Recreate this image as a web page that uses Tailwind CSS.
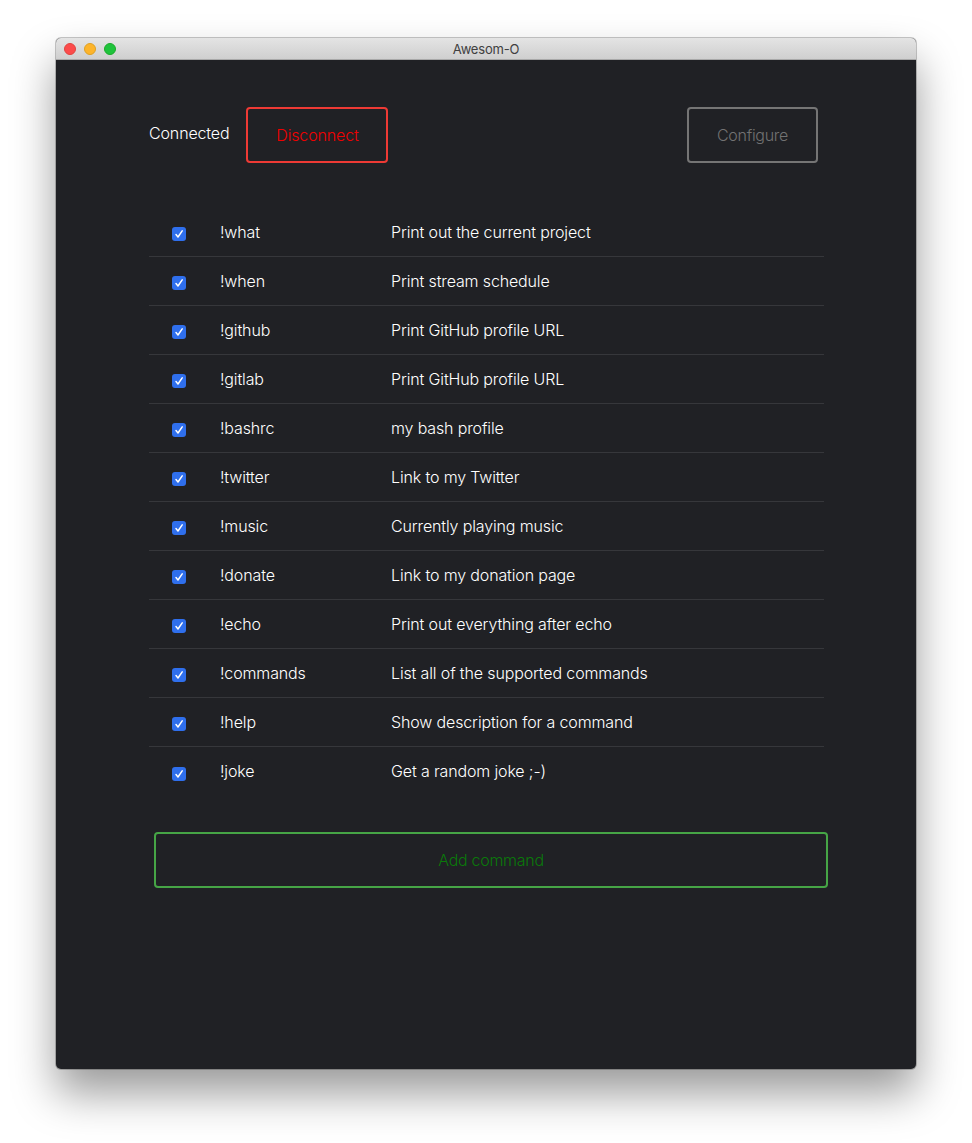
<!DOCTYPE html>
<html lang="en">

<head>
  <meta charset="UTF-8" />
  <title>Awesom-O</title>
  <script src="https://cdn.jsdelivr.net/npm/@tailwindcss/browser@4"></script>
</head>

<body class="bg-white font-['Inter',sans-serif] w-[972px] h-[1143px] overflow-hidden pt-[38px] pl-[56px]">

  <!-- Window -->
  <div class="w-[860px] h-[1031px] rounded-[5px] bg-[#202125] flex flex-col shadow-[0_0_0_1px_rgba(0,0,0,0.22),0_24px_44px_rgba(0,0,0,0.4)]">

    <!-- Title bar -->
    <div class="h-[22px] shrink-0 flex items-center relative rounded-t-[5px] bg-gradient-to-b from-[#e4e4e4] to-[#cfcfcf] border-b border-[#a8a8a8]">
      <div class="flex gap-2 pl-2">
        <span class="w-3 h-3 rounded-full bg-[#fc4b4b] border border-[#e0443e]"></span>
        <span class="w-3 h-3 rounded-full bg-[#fdb42a] border border-[#dea123]"></span>
        <span class="w-3 h-3 rounded-full bg-[#1fc33c] border border-[#1aab29]"></span>
      </div>
      <span class="absolute inset-x-0 text-center text-[13px] leading-[22px] tracking-[-0.2px] text-[#404040]">Awesom-O</span>
    </div>

    <div class="flex flex-col tracking-[-0.14px] font-[350]">
      <!-- Top bar -->
      <div class="pt-[47px] pl-[93px] pr-[98px] flex justify-between">
        <div class="flex gap-[17px]">
          <span class="text-white text-base leading-[52px]">Connected</span>
          <button class="w-[142px] h-[56px] border-2 border-[#ee3a35] rounded text-[#f00000] text-base">Disconnect</button>
        </div>
        <button class="w-[131px] h-[56px] border-2 border-[#757575] rounded text-[#727272] text-base tracking-[-0.29px]">Configure</button>
      </div>

      <!-- Commands -->
      <div id="commands" class="mt-[45px] ml-[93px] w-[675px] flex flex-col divide-y divide-[#36373b] text-white text-base">
        <div class="h-[49px] flex items-center"><span class="ml-[23px] w-[14px] h-[14px] mt-[4px] rounded-[3px] bg-[#2f6fed] flex items-center justify-center"><svg width="10" height="10" viewBox="0 0 10 10" fill="none" stroke="white" stroke-width="1.5" stroke-linecap="round" stroke-linejoin="round"><path d="M2 5.5 L4 8 L8.2 1.8" /></svg></span><span class="ml-[34px] w-[171px] -mt-[1px]">!what</span><span class="-mt-[1px]">Print out the current project</span></div>
        <div class="h-[49px] flex items-center"><span class="ml-[23px] w-[14px] h-[14px] mt-[4px] rounded-[3px] bg-[#2f6fed] flex items-center justify-center"><svg width="10" height="10" viewBox="0 0 10 10" fill="none" stroke="white" stroke-width="1.5" stroke-linecap="round" stroke-linejoin="round"><path d="M2 5.5 L4 8 L8.2 1.8" /></svg></span><span class="ml-[34px] w-[171px] -mt-[1px]">!when</span><span class="-mt-[1px]">Print stream schedule</span></div>
        <div class="h-[49px] flex items-center"><span class="ml-[23px] w-[14px] h-[14px] mt-[4px] rounded-[3px] bg-[#2f6fed] flex items-center justify-center"><svg width="10" height="10" viewBox="0 0 10 10" fill="none" stroke="white" stroke-width="1.5" stroke-linecap="round" stroke-linejoin="round"><path d="M2 5.5 L4 8 L8.2 1.8" /></svg></span><span class="ml-[34px] w-[171px] -mt-[1px]">!github</span><span class="-mt-[1px]">Print GitHub profile URL</span></div>
        <div class="h-[49px] flex items-center"><span class="ml-[23px] w-[14px] h-[14px] mt-[4px] rounded-[3px] bg-[#2f6fed] flex items-center justify-center"><svg width="10" height="10" viewBox="0 0 10 10" fill="none" stroke="white" stroke-width="1.5" stroke-linecap="round" stroke-linejoin="round"><path d="M2 5.5 L4 8 L8.2 1.8" /></svg></span><span class="ml-[34px] w-[171px] -mt-[1px]">!gitlab</span><span class="-mt-[1px]">Print GitHub profile URL</span></div>
        <div class="h-[49px] flex items-center"><span class="ml-[23px] w-[14px] h-[14px] mt-[4px] rounded-[3px] bg-[#2f6fed] flex items-center justify-center"><svg width="10" height="10" viewBox="0 0 10 10" fill="none" stroke="white" stroke-width="1.5" stroke-linecap="round" stroke-linejoin="round"><path d="M2 5.5 L4 8 L8.2 1.8" /></svg></span><span class="ml-[34px] w-[171px] -mt-[1px]">!bashrc</span><span class="-mt-[1px]">my bash profile</span></div>
        <div class="h-[49px] flex items-center"><span class="ml-[23px] w-[14px] h-[14px] mt-[4px] rounded-[3px] bg-[#2f6fed] flex items-center justify-center"><svg width="10" height="10" viewBox="0 0 10 10" fill="none" stroke="white" stroke-width="1.5" stroke-linecap="round" stroke-linejoin="round"><path d="M2 5.5 L4 8 L8.2 1.8" /></svg></span><span class="ml-[34px] w-[171px] -mt-[1px]">!twitter</span><span class="-mt-[1px]">Link to my Twitter</span></div>
        <div class="h-[49px] flex items-center"><span class="ml-[23px] w-[14px] h-[14px] mt-[4px] rounded-[3px] bg-[#2f6fed] flex items-center justify-center"><svg width="10" height="10" viewBox="0 0 10 10" fill="none" stroke="white" stroke-width="1.5" stroke-linecap="round" stroke-linejoin="round"><path d="M2 5.5 L4 8 L8.2 1.8" /></svg></span><span class="ml-[34px] w-[171px] -mt-[1px]">!music</span><span class="-mt-[1px]">Currently playing music</span></div>
        <div class="h-[49px] flex items-center"><span class="ml-[23px] w-[14px] h-[14px] mt-[4px] rounded-[3px] bg-[#2f6fed] flex items-center justify-center"><svg width="10" height="10" viewBox="0 0 10 10" fill="none" stroke="white" stroke-width="1.5" stroke-linecap="round" stroke-linejoin="round"><path d="M2 5.5 L4 8 L8.2 1.8" /></svg></span><span class="ml-[34px] w-[171px] -mt-[1px]">!donate</span><span class="-mt-[1px]">Link to my donation page</span></div>
        <div class="h-[49px] flex items-center"><span class="ml-[23px] w-[14px] h-[14px] mt-[4px] rounded-[3px] bg-[#2f6fed] flex items-center justify-center"><svg width="10" height="10" viewBox="0 0 10 10" fill="none" stroke="white" stroke-width="1.5" stroke-linecap="round" stroke-linejoin="round"><path d="M2 5.5 L4 8 L8.2 1.8" /></svg></span><span class="ml-[34px] w-[171px] -mt-[1px]">!echo</span><span class="-mt-[1px]">Print out everything after echo</span></div>
        <div class="h-[49px] flex items-center"><span class="ml-[23px] w-[14px] h-[14px] mt-[4px] rounded-[3px] bg-[#2f6fed] flex items-center justify-center"><svg width="10" height="10" viewBox="0 0 10 10" fill="none" stroke="white" stroke-width="1.5" stroke-linecap="round" stroke-linejoin="round"><path d="M2 5.5 L4 8 L8.2 1.8" /></svg></span><span class="ml-[34px] w-[171px] -mt-[1px]">!commands</span><span class="-mt-[1px]">List all of the supported commands</span></div>
        <div class="h-[49px] flex items-center"><span class="ml-[23px] w-[14px] h-[14px] mt-[4px] rounded-[3px] bg-[#2f6fed] flex items-center justify-center"><svg width="10" height="10" viewBox="0 0 10 10" fill="none" stroke="white" stroke-width="1.5" stroke-linecap="round" stroke-linejoin="round"><path d="M2 5.5 L4 8 L8.2 1.8" /></svg></span><span class="ml-[34px] w-[171px] -mt-[1px]">!help</span><span class="-mt-[1px]">Show description for a command</span></div>
        <div class="h-[49px] flex items-center"><span class="ml-[23px] w-[14px] h-[14px] mt-[4px] rounded-[3px] bg-[#2f6fed] flex items-center justify-center"><svg width="10" height="10" viewBox="0 0 10 10" fill="none" stroke="white" stroke-width="1.5" stroke-linecap="round" stroke-linejoin="round"><path d="M2 5.5 L4 8 L8.2 1.8" /></svg></span><span class="ml-[34px] w-[171px] -mt-[1px]">!joke</span><span class="-mt-[1px]">Get a random joke ;-)</span></div>
      </div>

      <!-- Add command -->
      <button class="mt-[36px] ml-[98px] w-[674px] h-[56px] border-2 border-[#46a546] rounded text-[#0a7a0a] text-base tracking-[-0.29px]">Add command</button>
    </div>
  </div>

</body>

</html>
